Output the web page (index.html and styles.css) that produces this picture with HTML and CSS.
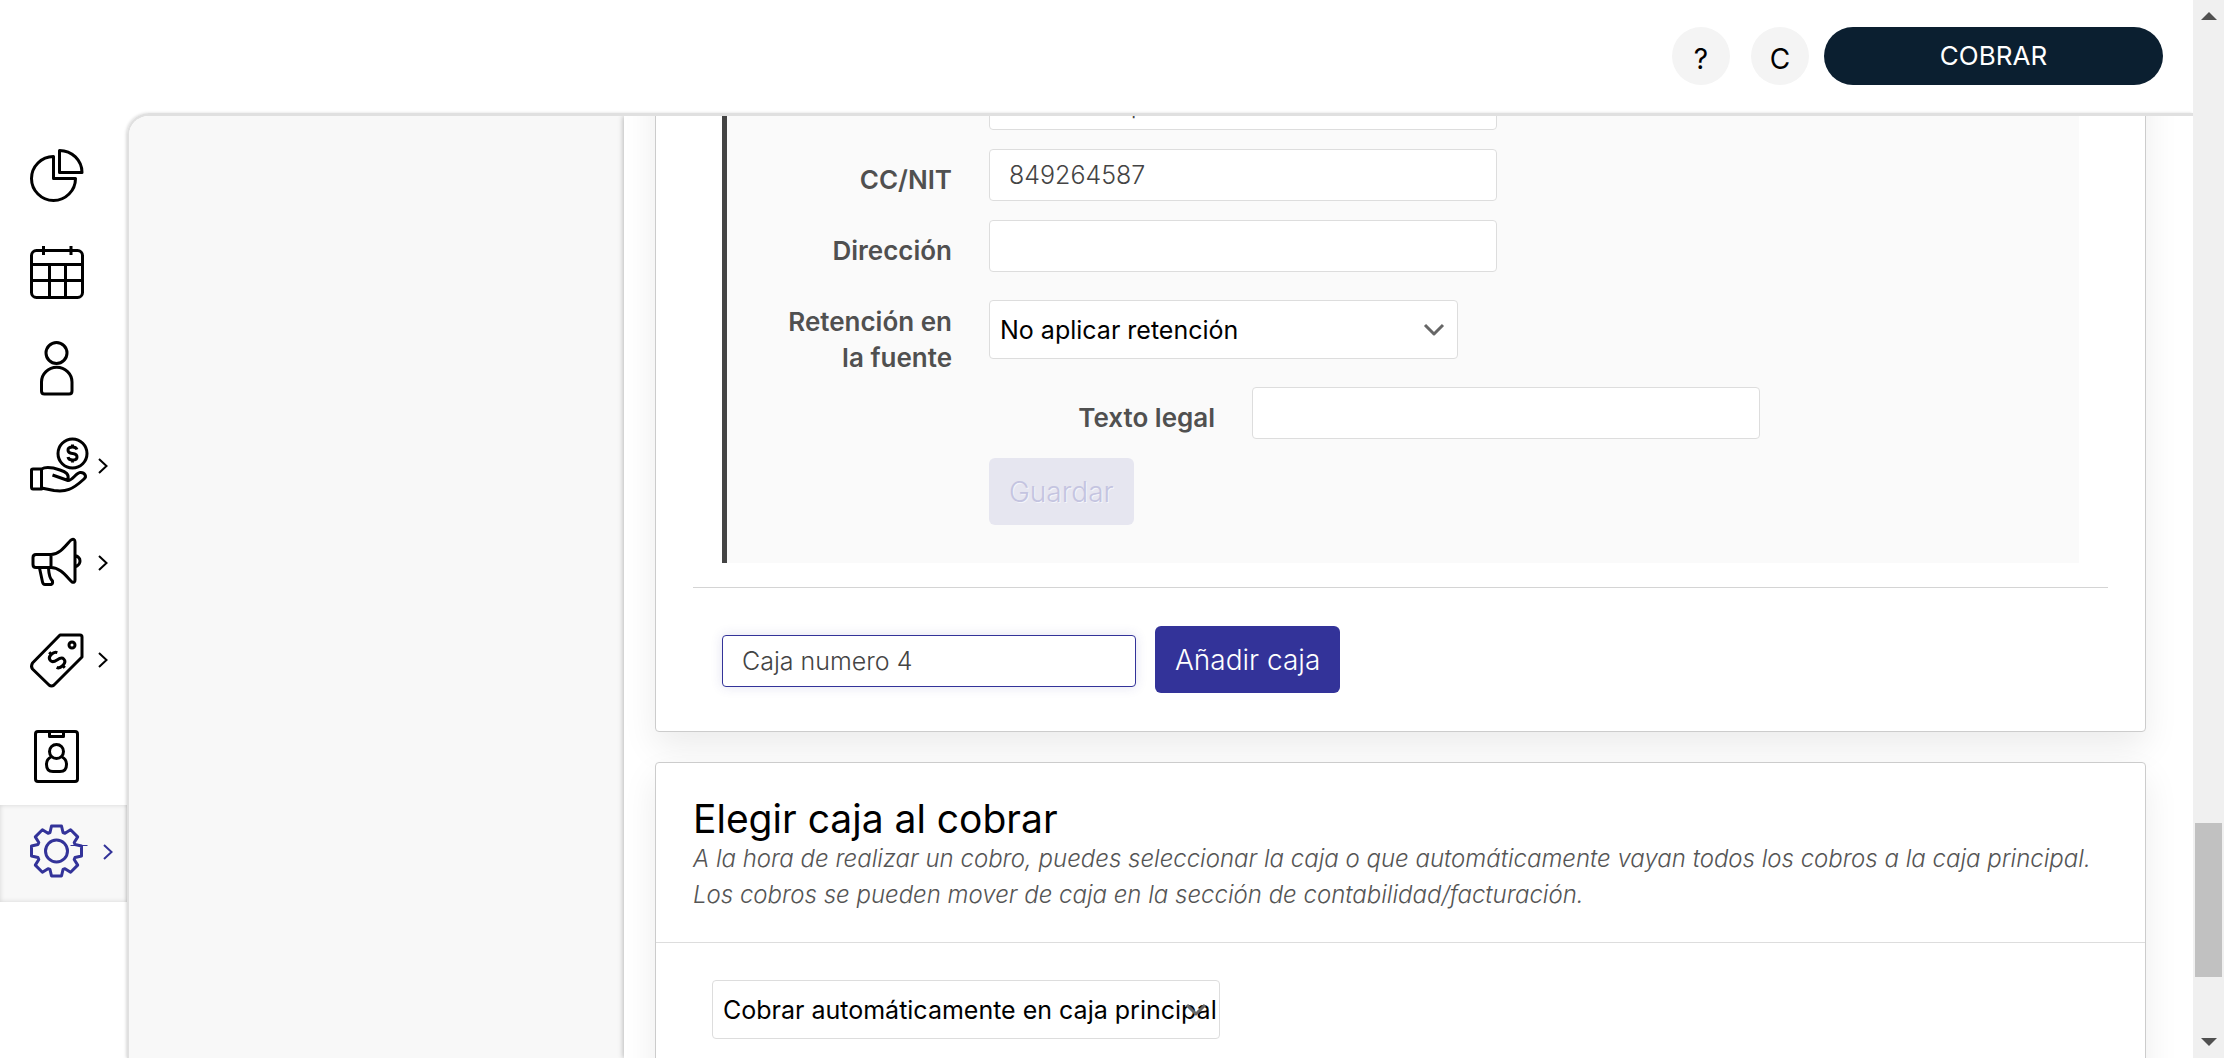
FILE: index.html
```html
<!DOCTYPE html>
<html lang="es">
<head>
<meta charset="utf-8">
<title>Configuración de cajas</title>
<link rel="stylesheet" href="styles.css">
</head>
<body>
<div class="app">
  <header class="topbar">
    <button class="round" type="button">?</button>
    <button class="round" type="button">C</button>
    <button class="charge" type="button">COBRAR</button>
  </header>
  <div class="body">
    <nav class="sidebar">
      <a class="item" href="#" aria-label="Estadísticas">
        <svg class="icon" viewBox="0 0 60 60"><path d="M27.500 11.500A22 22 0 1 0 49.500 33.500H27.500ZM33.500 5.500V27.500H56A22.500 22 0 0 0 33.500 5.500Z"/></svg>
      </a>
      <a class="item" href="#" aria-label="Agenda">
        <svg class="icon" viewBox="0 0 60 60"><rect x="5.500" y="8.500" width="51" height="47" rx="5"/><path d="M5.500 22.500H56.500M5.500 38.500H56.500M23.500 22.500V55M39.500 22.500V55M17.500 4V13M45 4V13"/></svg>
      </a>
      <a class="item" href="#" aria-label="Clientes">
        <svg class="icon" viewBox="0 0 60 60"><circle cx="30.500" cy="14" r="10.500"/><path d="M15.500 52V43A15 14.500 0 0 1 46 43V52Q46 55 43 55H18.500Q15.500 55 15.500 52Z"/></svg>
      </a>
      <a class="item" href="#" aria-label="Contabilidad">
        <svg class="icon" viewBox="0 0 60 60"><circle cx="46.500" cy="17.500" r="14.500"/><path d="M51 13.500Q50 11 46.500 11Q42 11 42 14Q42 17 46.500 17.500Q51 18 51 21Q51 24 46.500 24Q42.500 24 42 21M46.500 8.500V11M46.500 24V26.500"/><path d="M5.500 34Q5.500 33 7 33H15.500V53H7Q5.500 53 5.500 51ZM15.500 33C21 30 28 32 34 34C40 36 43 38 42 43M26.500 39L42 44.500C46 45 50 37 54 36.500C59 36 61 41 58 43C46 54 40 56 28 54.500L15.500 52"/></svg>
        <svg class="chev" viewBox="0 0 10 16"><path d="M1 1L8.500 8L1 15"/></svg>
      </a>
      <a class="item" href="#" aria-label="Marketing">
        <svg class="icon" viewBox="0 0 60 60"><path d="M10 21.500H25V34.500H10Q7 34.500 7 31.500V24.500Q7 21.500 10 21.500ZM25 21.500C34 21.500 40 12 45 7Q49 5 49 9V47Q49 50 46 49C40 43 34 34.500 25 34.500M13.500 35L16.500 49Q17 51.500 19 51.500H25Q27 51 26.500 48Q23 45 22.500 35M49 22.500Q54 24 54 28Q54 32 49 34"/></svg>
        <svg class="chev" viewBox="0 0 10 16"><path d="M1 1L8.500 8L1 15"/></svg>
      </a>
      <a class="item" href="#" aria-label="Tarifas">
        <svg class="icon" viewBox="0 0 60 60"><path d="M34 5H54Q56 5 56 7V27L28 55Q25.500 57 23 55L6.500 39Q4.500 36.500 6.500 33Z"/><circle cx="46" cy="15" r="3"/><path transform="translate(31 30) rotate(-45)" d="M5.500 -5Q4 -8 0 -8Q-5 -8 -5 -4Q-5 -1 0 0Q5.500 1 5.500 4Q5.500 8 0 8Q-4.500 8 -5.500 5M0 -11V-8M0 8V11"/></svg>
        <svg class="chev" viewBox="0 0 10 16"><path d="M1 1L8.500 8L1 15"/></svg>
      </a>
      <a class="item" href="#" aria-label="Empleados">
        <svg class="icon" viewBox="0 0 60 60"><rect x="9.500" y="4.500" width="42" height="50" rx="2.500"/><path d="M23.500 4.500V9.500H37.500V4.500"/><circle cx="30.500" cy="24.500" r="7"/><path d="M25 30Q20.500 32 20.500 37.500Q20.500 44.500 27 44.500H34Q40.500 44.500 40.500 37.500Q40.500 32 36 30"/></svg>
      </a>
      <a class="item active" href="#" aria-label="Configuración" aria-current="page">
        <svg class="icon" viewBox="-30.500 -29 60 60"><circle r="11"/><path d="M-6.500 -18.500L-5 -25H5L6.500 -18.500L8.500 -17.700L14.100 -21.200L21.200 -14.100L17.700 -8.500L18.500 -6.500L25 -5V5L18.500 6.500L17.700 8.500L21.200 14.100L14.100 21.200L8.500 17.700L6.500 18.500L5 25H-5L-6.500 18.500L-8.500 17.700L-14.100 21.200L-21.200 14.100L-17.700 8.500L-18.500 6.500L-25 5V-5L-18.500 -6.500L-17.700 -8.500L-21.200 -14.100L-14.100 -21.200L-8.500 -17.700Z"/><path class="thin" d="M14 -5.500H31"/></svg>
        <svg class="chev" viewBox="0 0 10 16"><path d="M1 1L8.500 8L1 15"/></svg>
      </a>
    </nav>
    <div class="frame">
      <aside class="submenu"></aside>
      <main class="content">
        <section class="card card-boxes">
          <form class="details">
            <div class="row">
              <span></span>
              <input type="text" aria-label="Nombre" value="Centro de prueba">
            </div>
            <div class="row">
              <label for="nit">CC/NIT</label>
              <input id="nit" type="text" value="849264587">
            </div>
            <div class="row">
              <label for="address">Dirección</label>
              <input id="address" type="text">
            </div>
            <div class="row row-select">
              <label for="retention">Retención en la fuente</label>
              <div class="select select-retention">
                <select id="retention"><option>No aplicar retención</option></select>
                <svg class="arrow" viewBox="0 0 22 14"><path d="M2 2L11 11L20 2"/></svg>
              </div>
            </div>
            <div class="row row-legal">
              <label for="legal">Texto legal</label>
              <input id="legal" type="text">
            </div>
            <div class="row">
              <span></span>
              <button class="btn" type="button" disabled>Guardar</button>
            </div>
          </form>
          <hr class="rule">
          <form class="add">
            <input class="focused" type="text" aria-label="Nombre de la caja" value="Caja numero 4">
            <button class="btn" type="button">Añadir caja</button>
          </form>
        </section>
        <section class="card">
          <header class="card-head">
            <h2>Elegir caja al cobrar</h2>
            <p>A la hora de realizar un cobro, puedes seleccionar la caja o que automáticamente vayan todos los cobros a la caja principal. Los cobros se pueden mover de caja en la sección de contabilidad/facturación.</p>
          </header>
          <div class="card-body">
            <div class="select select-charge">
              <select aria-label="Caja al cobrar"><option>Cobrar automáticamente en caja principal</option></select>
              <svg class="arrow" viewBox="0 0 22 14"><path d="M2 2L11 11L20 2"/></svg>
            </div>
          </div>
        </section>
      </main>
    </div>
  </div>
</div>
<div class="scrollbar">
  <span class="up"></span>
  <span class="track"><span class="thumb"></span></span>
  <span class="down"></span>
</div>
</body>
</html>
```
FILE: styles.css
```css
* { box-sizing: border-box; }

body {
  margin: 0;
  height: 100vh;
  display: flex;
  overflow: hidden;
  background: #fff;
  color: #000;
  font: 400 25px/36px Inter, "Open Sans", sans-serif;
}

button, input, select { font: inherit; }

.app { flex: 1; min-width: 0; display: flex; flex-direction: column; }

.topbar {
  flex: none;
  height: 113px;
  padding: 0 30px 2px 0;
  display: flex;
  justify-content: flex-end;
  align-items: center;
}

.round {
  width: 58px;
  height: 58px;
  margin-right: 21px;
  padding: 6px 0 0;
  border: 0;
  border-radius: 50%;
  background: #f4f4f4;
  color: #000;
  font-size: 28px;
}

.round + .round { margin-right: 15px; }

.charge {
  width: 339px;
  height: 58px;
  padding: 0;
  border: 0;
  border-radius: 29px;
  background: #0b1f30;
  color: #fff;
  font-size: 26px;
}

.body { flex: 1; min-height: 0; display: flex; }

.sidebar { flex: none; width: 127px; padding-top: 13px; }

.item {
  height: 97px;
  padding: 0 0 0 26px;
  display: flex;
  align-items: center;
  gap: 12px;
  color: #000;
}

.item.active {
  padding-bottom: 4px;
  gap: 17px;
  color: #339;
  background: #f8f8f8;
  box-shadow: inset 0 0 5px rgba(0, 0, 0, .15);
}

.icon, .chev, .arrow {
  flex: none;
  overflow: visible;
  fill: none;
  stroke: currentColor;
  stroke-width: 3;
  stroke-linejoin: round;
}

.icon { width: 60px; height: 60px; }
.icon .thin { stroke-width: 1; }
.chev { width: 10px; height: 16px; stroke-width: 2; stroke-linejoin: miter; }

.frame {
  flex: 1;
  min-width: 0;
  display: flex;
  overflow: hidden;
  border: solid #e0e0e0;
  border-width: 3px 0 0 2px;
  border-top-left-radius: 22px;
  box-shadow: -1px 0 3px rgba(0, 0, 0, .15);
}

.submenu { flex: none; width: 495px; background: #f8f8f8; }

.content {
  flex: 1;
  min-width: 0;
  padding: 0 47px 0 31px;
  background: #fff;
  box-shadow: -1px 0 5px rgba(0, 0, 0, .25);
}

.card {
  margin-bottom: 30px;
  border: 1px solid #ccc;
  border-radius: 4px;
  background: #fff;
  box-shadow: 0 15px 35px rgba(0, 0, 0, .08);
}

/* first card is shown scrolled up under the top bar */
.card-boxes { margin-top: -58px; padding: 0 37px 38px; }

.details {
  margin: 0 29px;
  padding: 19px 0 38px;
  border-left: 5px solid #444;
  background: #fafafa;
}

.row {
  display: grid;
  grid-template-columns: 225px 508px;
  column-gap: 37px;
  align-items: start;
  margin-bottom: 19px;
}

.row:last-child { margin-bottom: 0; }
.row-select { margin-bottom: 11px; }
.row-legal { grid-template-columns: 488px 508px; }

.row label {
  padding: 13px 0 0 50px;
  color: #505050;
  font-size: 26px;
  font-weight: 600;
  text-align: right;
}

.row-select .select { margin-top: 9px; }
.row .btn { justify-self: start; }

input {
  width: 100%;
  height: 52px;
  padding: 0 19px;
  border: 1px solid #ddd;
  border-radius: 4px;
  background: #fff;
  color: #444;
  font-weight: 300;
  outline: 0;
}

.focused { width: 414px; border-color: #339; box-shadow: 0 0 12px rgba(51, 51, 153, .15); }

.select { position: relative; }
.select-retention { width: 469px; }
.select-charge { width: 508px; }

select {
  width: 100%;
  height: 59px;
  padding: 0 0 0 10px;
  border: 1px solid #ddd;
  border-radius: 4px;
  background: #fff;
  color: #000;
  appearance: none;
}

.arrow {
  position: absolute;
  top: 23px;
  right: 13px;
  width: 22px;
  height: 14px;
  color: #666;
  pointer-events: none;
}

.btn {
  height: 67px;
  padding: 0 20px;
  border: 0;
  border-radius: 6px;
  background: #339;
  color: #fff;
  font-size: 28px;
  font-weight: 300;
}

.btn:disabled { background: #e6e6f0; color: #c4c4e0; text-shadow: 1px 1px 0 #f4f4fa; }

.rule { margin: 24px 0 38px; border: 0; border-top: 1px solid #d4d4d4; }

.add { margin: 0 29px; display: flex; align-items: flex-end; gap: 19px; }
.add .focused { margin-bottom: 6px; }

.card-head { padding: 33px 37px 29px; border-bottom: 1px solid #ddd; }

h2 { margin: 0; font-size: 39px; line-height: 45px; font-weight: 400; }

p { margin: 0; color: #555; font-size: 24px; font-style: italic; font-weight: 300; }

.card-body { padding: 37px 56px 60px; }

.scrollbar {
  flex: none;
  width: 31px;
  padding: 12px 2px;
  display: flex;
  flex-direction: column;
  align-items: center;
  background: #f0f0f0;
}

.up, .down { border: solid transparent; border-width: 0 8px; }
.up { border-bottom: 8px solid #505050; }
.down { border-top: 8px solid #505050; }

.track { flex: 1; width: 100%; display: flex; flex-direction: column; justify-content: flex-end; padding-bottom: 61px; }
.thumb { height: 154px; background: #c1c1c1; }
```
